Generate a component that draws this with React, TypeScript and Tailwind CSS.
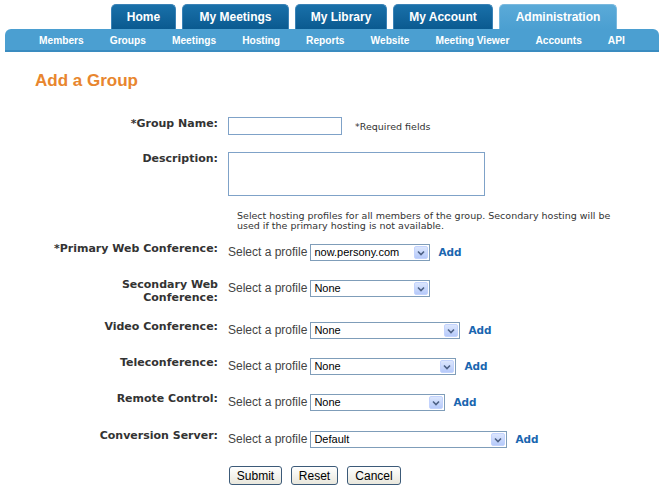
import React from "react";

const tabs = [
  { label: "Home", w: "w-[65px]" },
  { label: "My Meetings", w: "w-[107px]" },
  { label: "My Library", w: "w-[92px]" },
  { label: "My Account", w: "w-[100px]" },
];

const subnav = ["Members", "Groups", "Meetings", "Hosting", "Reports", "Website", "Meeting Viewer", "Accounts", "API"];

function Chevron() {
  return (
    <svg width="8" height="6" viewBox="0 0 8 6">
      <path d="M1 1.5 L4 4.5 L7 1.5" stroke="#4d6185" strokeWidth="1.6" fill="none" />
    </svg>
  );
}

function FakeSelect({ value, w }: { value: string; w: string }) {
  return (
    <div className={`${w} h-[17px] border border-[#7f9db9] bg-white flex items-center justify-between pl-[3px] pr-[1px]`}>
      <span className="text-[11px] leading-[13px] text-black [font-family:'Liberation_Sans',Arial,sans-serif]">{value}</span>
      <div className="w-[14px] h-[13px] rounded-[2px] bg-gradient-to-b from-[#dce6fd] to-[#b6cafa] border border-[#c3d3fd] flex items-center justify-center">
        <Chevron />
      </div>
    </div>
  );
}

function SelectRow({
  label,
  value,
  w,
  add = true,
  mt,
}: {
  label: React.ReactNode;
  value: string;
  w: string;
  add?: boolean;
  mt: string;
}) {
  return (
    <div className={`flex items-start ${mt}`}>
      <div className="w-[218px] shrink-0 text-right text-[11px] leading-[13px] font-bold text-[#333] [font-family:'DejaVu_Sans',Verdana,sans-serif] whitespace-nowrap">
        {label}
      </div>
      <div className="ml-[10px] mt-[2px] flex items-center">
        <span className="text-[12px] leading-[17px] text-[#444] [font-family:'Liberation_Sans',Arial,sans-serif] mr-[3px]">
          Select a profile
        </span>
        <FakeSelect value={value} w={w} />
        {add && (
          <span className="ml-[8px] text-[10.5px] font-bold text-[#1a66b0] [font-family:'DejaVu_Sans',Verdana,sans-serif]">Add</span>
        )}
      </div>
    </div>
  );
}

function Btn({ children, w }: { children: React.ReactNode; w: string }) {
  return (
    <div
      className={`${w} h-[19px] rounded-[3px] border border-[#3c5a78] bg-gradient-to-b from-[#ffffff] to-[#e9e7dc] flex items-center justify-center text-[12px] text-black [font-family:'Liberation_Sans',Arial,sans-serif]`}
    >
      {children}
    </div>
  );
}

export default function App() {
  return (
    <div className="w-[664px] h-[494px] bg-white overflow-hidden [font-family:'Liberation_Sans',Arial,sans-serif]">
      {/* Tabs */}
      <div className="pt-[4px] pl-[111px] flex gap-[6px]">
        {tabs.map((t) => (
          <div
            key={t.label}
            className={`${t.w} h-[25px] rounded-t-[5px] border border-b-0 border-[#3a82b6] bg-gradient-to-b from-[#1970a9] to-[#0a5a90] flex items-center justify-center text-white font-bold text-[12px]`}
          >
            {t.label}
          </div>
        ))}
        <div className="w-[118px] h-[25px] rounded-t-[5px] border border-b-0 border-[#7ab9de] bg-gradient-to-b from-[#5aaad8] to-[#4b9fd1] flex items-center justify-center text-white font-bold text-[12px]">
          Administration
        </div>
      </div>
      {/* Sub nav */}
      <div className="mx-[5px] h-[23px] rounded-t-[6px] bg-[#4b9fd1] border-b-2 border-[#3a8cc0] flex items-center pt-[3px] pl-[34px] gap-[26px] text-white font-bold text-[10.2px]">
        {subnav.map((s) => (
          <span key={s}>{s}</span>
        ))}
      </div>

      {/* Title */}
      <div className="mt-[19px] pl-[35px] text-[17px] leading-[20px] font-bold text-[#e8862e]">Add a Group</div>

      {/* Form */}
      <div className="mt-[26px] flex flex-col">
        <div className="flex items-start">
          <div className="w-[218px] text-right text-[11px] leading-[13px] font-bold text-[#333] [font-family:'DejaVu_Sans',Verdana,sans-serif]">
            *Group Name:
          </div>
          <div className="ml-[10px] w-[114px] h-[18px] border border-[#7fa2c8]" />
          <div className="ml-[13px] mt-[5px] text-[9.5px] leading-[10px] text-[#333] [font-family:'DejaVu_Sans',Verdana,sans-serif]">
            *Required fields
          </div>
        </div>

        <div className="flex items-start mt-[17px]">
          <div className="w-[218px] text-right text-[11px] leading-[13px] font-bold text-[#333] [font-family:'DejaVu_Sans',Verdana,sans-serif]">
            Description:
          </div>
          <div className="ml-[10px] w-[257px] h-[44px] border border-[#7fa2c8]" />
        </div>

        <div className="mt-[15px] pl-[237px] text-[9.5px] leading-[10px] text-[#333] [font-family:'DejaVu_Sans',Verdana,sans-serif] whitespace-nowrap">
          Select hosting profiles for all members of the group. Secondary hosting will be
          <br />
          used if the primary hosting is not available.
        </div>

        <SelectRow mt="mt-[11px]" label="*Primary Web Conference:" value="now.persony.com" w="w-[120px]" />
        <SelectRow
          mt="mt-[17px]"
          label={
            <>
              Secondary Web
              <br />
              Conference:
            </>
          }
          value="None"
          w="w-[120px]"
          add={false}
        />
        <SelectRow mt="mt-[16px]" label="Video Conference:" value="None" w="w-[150px]" />
        <SelectRow mt="mt-[17px]" label="Teleconference:" value="None" w="w-[146px]" />
        <SelectRow mt="mt-[17px]" label="Remote Control:" value="None" w="w-[135px]" />
        <SelectRow mt="mt-[18px]" label="Conversion Server:" value="Default" w="w-[197px]" />

        <div className="mt-[18px] pl-[229px] flex gap-[9px]">
          <Btn w="w-[53px]">Submit</Btn>
          <Btn w="w-[47px]">Reset</Btn>
          <Btn w="w-[54px]">Cancel</Btn>
        </div>
      </div>
    </div>
  );
}
